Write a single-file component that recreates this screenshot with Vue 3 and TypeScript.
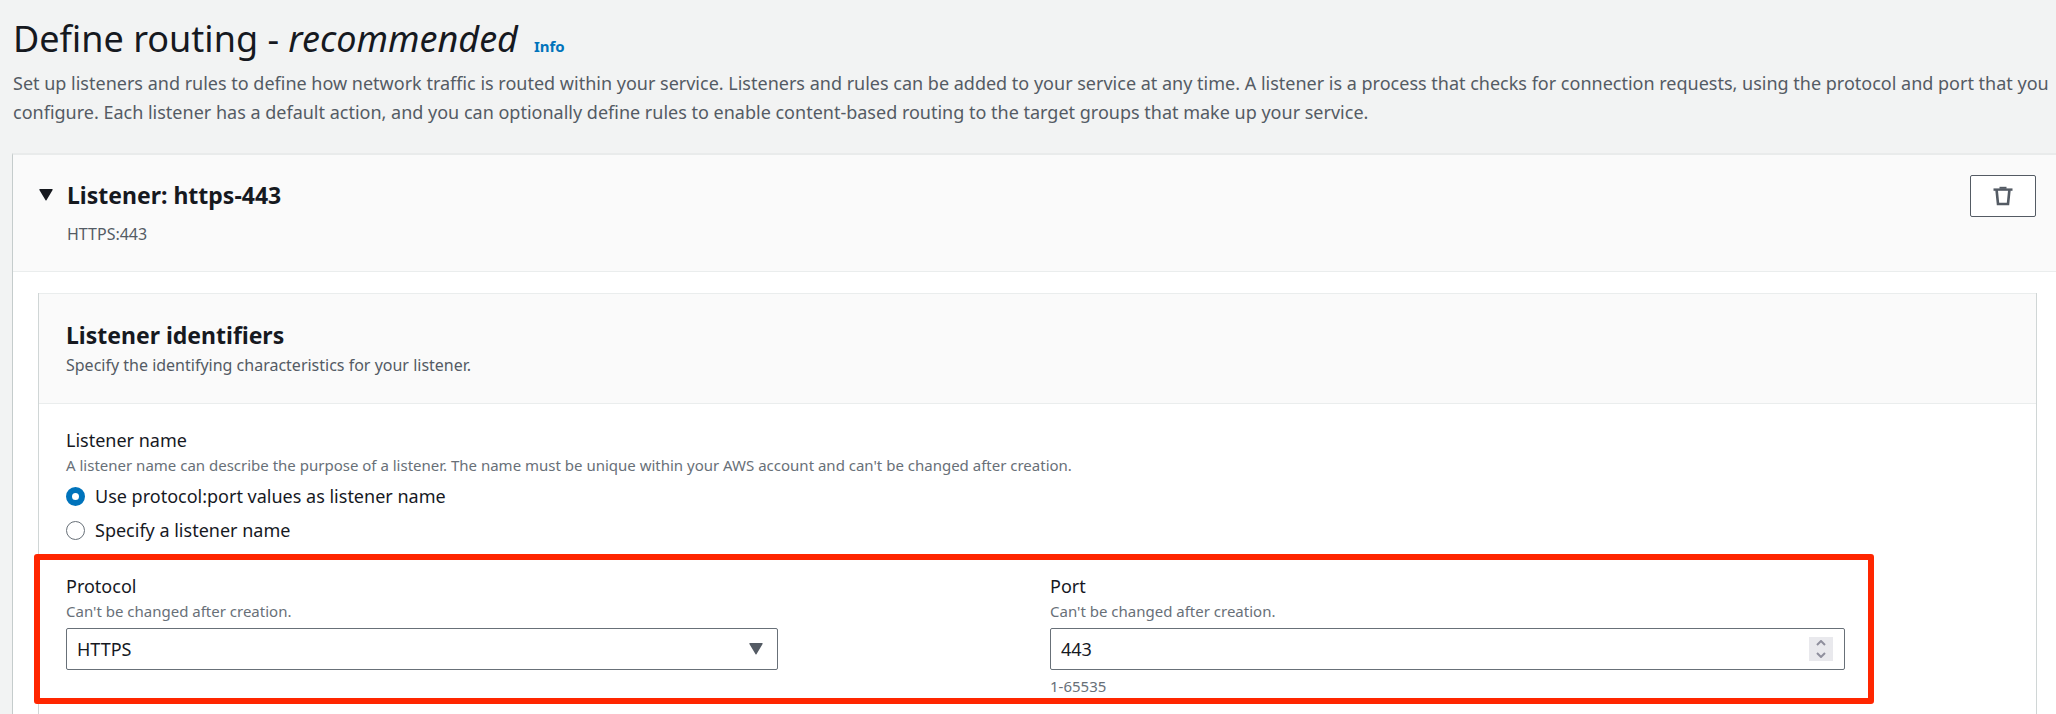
<script setup lang="ts">
import { ref } from 'vue'

type NameMode = 'auto' | 'custom'

const expanded = ref(true)
const nameMode = ref<NameMode>('auto')
const protocol = ref('HTTPS')
const port = ref(443)

const nameOptions: { value: NameMode; label: string }[] = [
  { value: 'auto', label: 'Use protocol:port values as listener name' },
  { value: 'custom', label: 'Specify a listener name' },
]

function step(delta: number) {
  port.value = Math.min(65535, Math.max(1, port.value + delta))
}
</script>

<template>
  <main class="page">
    <header class="intro">
      <div class="title-row">
        <h1>Define routing - <em>recommended</em></h1>
        <a class="info" href="#info">Info</a>
      </div>
      <p class="lead">
        Set up listeners and rules to define how network traffic is routed within your service. Listeners and rules can
        be added to your service at any time. A listener is a process that checks for connection requests, using the
        protocol and port that you configure. Each listener has a default action, and you can optionally define rules to
        enable content-based routing to the target groups that make up your service.
      </p>
    </header>

    <section class="listener">
      <div class="listener-head">
        <button class="toggle" type="button" aria-label="Toggle listener" :aria-expanded="expanded" @click="expanded = !expanded">
          <svg width="14" height="12" viewBox="0 0 14 12" aria-hidden="true"><path d="M1 0h12q1 0 .6 1L7.6 11q-.6 1-1.2 0L.4 1Q0 0 1 0z" /></svg>
        </button>
        <div class="listener-title">
          <h2>Listener: https-443</h2>
          <p class="sub">HTTPS:443</p>
        </div>
        <button class="remove" type="button" aria-label="Remove listener">
          <svg width="20" height="20" viewBox="0 0 20 20" fill="none" stroke="currentColor" aria-hidden="true">
            <path stroke-width="2.4" d="M0.5 3.6h19" /><path stroke-width="2" d="M6.5 1.8h7" /><path stroke-width="2.6" d="M3.6 4l1.4 14h10l1.4-14" />
          </svg>
        </button>
      </div>

      <div v-if="expanded" class="listener-body">
        <section class="panel">
          <div class="panel-head">
            <h2>Listener identifiers</h2>
            <p class="sub">Specify the identifying characteristics for your listener.</p>
          </div>
          <div class="panel-body">
            <fieldset class="names">
              <legend>Listener name</legend>
              <p class="hint">
                A listener name can describe the purpose of a listener. The name must be unique within your AWS account
                and can't be changed after creation.
              </p>
              <div class="options">
                <label v-for="o in nameOptions" :key="o.value" class="option">
                  <input v-model="nameMode" type="radio" name="name-mode" :value="o.value" />
                  <span>{{ o.label }}</span>
                </label>
              </div>
            </fieldset>

            <div class="fields">
              <div class="field">
                <label for="protocol">Protocol</label>
                <p class="hint">Can't be changed after creation.</p>
                <div class="control">
                  <select id="protocol" v-model="protocol">
                    <option>HTTPS</option>
                    <option>HTTP</option>
                  </select>
                  <svg class="caret" width="14" height="12" viewBox="0 0 14 12" aria-hidden="true"><path d="M1 0h12q1 0 .6 1L7.6 11q-.6 1-1.2 0L.4 1Q0 0 1 0z" /></svg>
                </div>
              </div>
              <div class="field">
                <label for="port">Port</label>
                <p class="hint">Can't be changed after creation.</p>
                <div class="control">
                  <input id="port" v-model.number="port" type="number" min="1" max="65535" />
                  <div class="spinner">
                    <button type="button" aria-label="Increase port" @click="step(1)">
                      <svg width="10" height="6" viewBox="0 0 10 6" aria-hidden="true"><path d="M1 5l4-4 4 4" /></svg>
                    </button>
                    <button type="button" aria-label="Decrease port" @click="step(-1)">
                      <svg width="10" height="6" viewBox="0 0 10 6" aria-hidden="true"><path d="M1 1l4 4 4-4" /></svg>
                    </button>
                  </div>
                </div>
                <p class="hint limit">1-65535</p>
              </div>
              <div class="highlight" aria-hidden="true"></div>
            </div>
          </div>
        </section>
      </div>
    </section>
  </main>
</template>

<style>
body {
  margin: 0;
  background: #f2f3f3;
}
</style>

<style scoped>
* {
  box-sizing: border-box;
}
.page {
  display: flex;
  flex-direction: column;
  min-height: 100vh;
  padding: 15px 0 0 12px;
  color: #16191f;
  font: 18px/24px "Noto Sans", "Open Sans", sans-serif;
}
h1,
h2,
p {
  margin: 0;
}
button,
input,
select {
  font: inherit;
  color: inherit;
}
.intro {
  padding-left: 1px;
}
.title-row {
  display: flex;
  align-items: baseline;
  gap: 16px;
}
h1 {
  font-size: 36px;
  line-height: 48px;
  font-weight: 400;
}
h2 {
  font-size: 23px;
  line-height: 32px;
  font-weight: 700;
}
.info {
  color: #0073bb;
  font-size: 15px;
  font-weight: 700;
  text-decoration: none;
}
.lead {
  margin-top: 6px;
  color: #545b64;
  line-height: 29px;
}
.listener {
  display: flex;
  flex-direction: column;
  flex: 1;
  margin-top: 26px;
  border-top: 2px solid #e9ebeb;
  border-left: 1px solid #c5cccc;
  background: #fff;
}
.listener-head {
  display: flex;
  align-items: flex-start;
  padding: 20px 20px 25px 25px;
  border-bottom: 1px solid #eaeded;
  background: #fafafa;
}
.toggle {
  display: flex;
  align-items: center;
  height: 40px;
  padding: 0 14px 0 1px;
  border: 0;
  background: none;
  fill: #16191f;
}
.listener-title {
  flex: 1;
  padding-top: 4px;
}
.listener-title .sub {
  margin-top: 11px;
}
.sub {
  color: #545b64;
  font-size: 16px;
}
.remove {
  display: flex;
  align-items: center;
  justify-content: center;
  width: 66px;
  height: 42px;
  padding: 0;
  border: 1px solid #545b64;
  border-radius: 2px;
  background: #fff;
  color: #545b64;
}
.listener-body {
  display: flex;
  flex: 1;
  padding: 21px 19px 0 25px;
}
.panel {
  flex: 1;
  border: solid #d0d6d6;
  border-width: 0 1px;
}
.panel-head {
  padding: 25px 27px 26px;
  border: solid #eaeded;
  border-width: 1px 0;
  background: #fafafa;
}
.panel-head .sub {
  margin-top: 2px;
}
.panel-body {
  padding: 24px 27px 16px;
}
.names {
  min-width: 0;
  margin: 0;
  padding: 0;
  border: 0;
}
legend {
  padding: 0;
}
.hint {
  margin-top: 1px;
  color: #687078;
  font-size: 15px;
}
.options {
  display: flex;
  flex-direction: column;
  gap: 10px;
  margin-top: 7px;
}
.option {
  display: flex;
  align-items: center;
  gap: 10px;
}
.option input {
  appearance: none;
  width: 19px;
  height: 19px;
  margin: 0;
  border: 1px solid #687078;
  border-radius: 50%;
  background: #fff;
}
.option input:checked {
  border: 6px solid #0073bb;
}
.fields {
  position: relative;
  display: grid;
  grid-template-columns: 712fr 795fr;
  gap: 272px;
  margin-top: 32px;
  margin-right: 164px;
}
.field label {
  display: block;
}
.control {
  display: flex;
  align-items: center;
  height: 42px;
  margin-top: 5px;
  border: 1px solid #687078;
  border-radius: 2px;
  background: #fff;
}
.control select,
.control input {
  flex: 1;
  min-width: 0;
  height: 100%;
  padding: 0 10px;
  border: 0;
  outline: 0;
  background: none;
  appearance: none;
}
.control input {
  appearance: textfield;
}
.control input::-webkit-inner-spin-button {
  appearance: none;
  margin: 0;
}
.caret {
  margin-right: 14px;
  fill: #545b64;
  pointer-events: none;
}
.spinner {
  display: flex;
  flex-direction: column;
  width: 24px;
  height: 24px;
  margin-right: 11px;
  background: #e9e9ed;
}
.spinner button {
  display: flex;
  flex: 1;
  align-items: center;
  justify-content: center;
  padding: 0;
  border: 0;
  background: none;
}
.spinner path {
  fill: none;
  stroke: #8f8f9d;
  stroke-width: 2;
}
.limit {
  margin-top: 4px;
}
.highlight {
  position: absolute;
  inset: -20px -29px -6px -32px;
  border: 6px solid #ff2600;
  border-radius: 3px;
  pointer-events: none;
}
</style>
